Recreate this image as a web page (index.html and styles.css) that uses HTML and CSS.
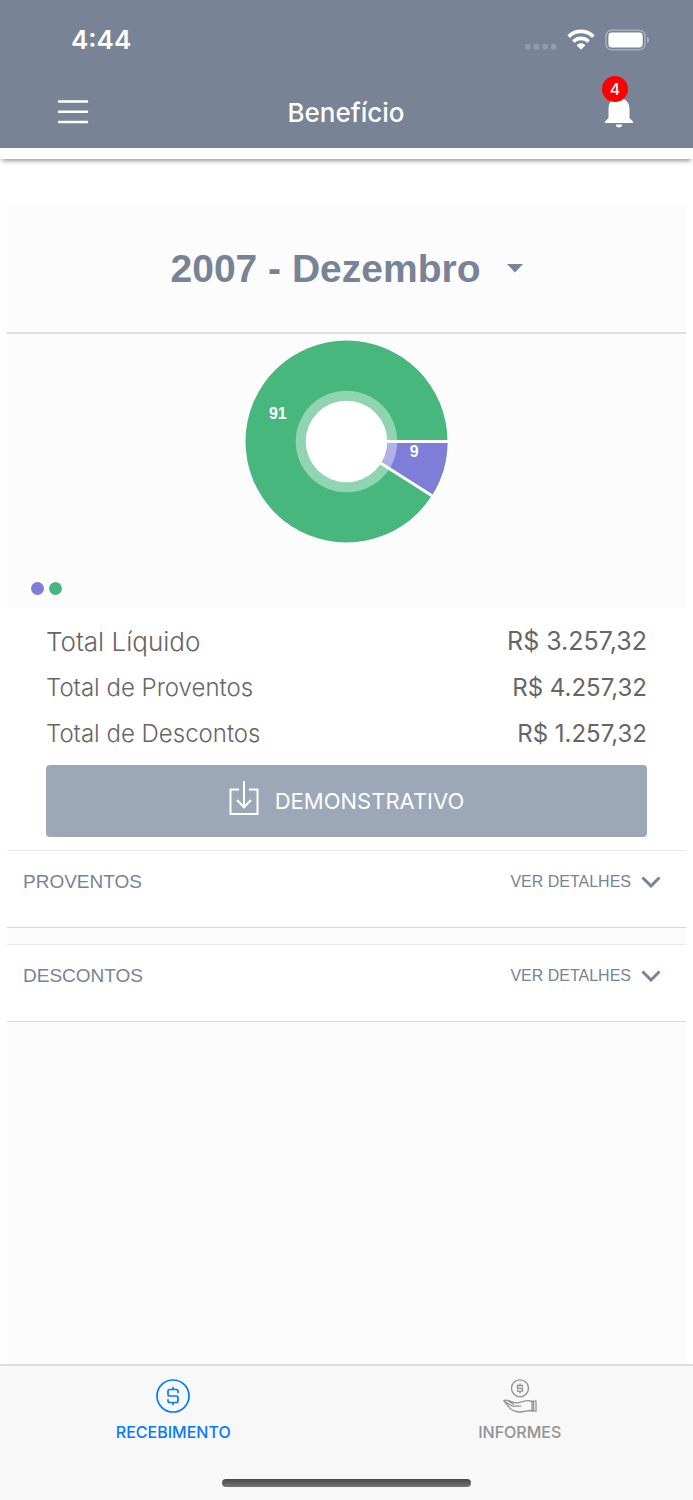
FILE: index.html
```html
<!DOCTYPE html>
<html lang="pt-BR">
<head>
  <meta charset="UTF-8">
  <meta name="viewport" content="width=device-width, initial-scale=1">
  <title>Benefício</title>
  <link rel="stylesheet" href="styles.css">
</head>
<body>

  <header class="header">
    <div class="status-bar">
      <span class="status-time">4:44</span>
      <div class="status-icons">
        <svg class="icon-signal" viewBox="0 0 32 6" aria-hidden="true">
          <rect x="0" y="0" width="5.500" height="5.500" rx="1.800"/>
          <rect x="8.700" y="0" width="5.500" height="5.500" rx="1.800"/>
          <rect x="17.400" y="0" width="5.500" height="5.500" rx="1.800"/>
          <rect x="26" y="0" width="5.500" height="5.500" rx="1.800"/>
        </svg>
        <svg class="icon-wifi" viewBox="0 0 28 22" aria-hidden="true">
          <path d="M14 .6C19.1.6 23.7 2.500 27.200 5.700c.3.3.3.7 0 1l-1.700 1.700c-.3.3-.7.3-1 0C21.700 5.800 18 4.300 14 4.300S6.300 5.800 3.500 8.400c-.3.3-.7.3-1 0L.8 6.700c-.3-.3-.3-.7 0-1C4.300 2.500 8.900.6 14 .6z"/>
          <path d="M14 7.500c3.200 0 6.200 1.200 8.500 3.300.3.3.3.7 0 1l-1.700 1.700c-.3.300-.7.300-1 0-1.500-1.400-3.600-2.300-5.800-2.300s-4.300.9-5.800 2.300c-.3.300-.7.300-1 0l-1.700-1.700c-.3-.3-.3-.7 0-1C7.800 8.700 10.800 7.500 14 7.500z"/>
          <path d="M14 14.200c1.500 0 2.800.6 3.900 1.500.3.300.3.700 0 1L14.500 20.200c-.3.300-.7.300-1 0l-3.400-3.500c-.3-.3-.3-.7 0-1 1.100-.9 2.400-1.500 3.900-1.500z"/>
        </svg>
        <svg class="icon-battery" viewBox="0 0 46 22" aria-hidden="true">
          <rect class="battery-case" x="1" y="1" width="40" height="20" rx="6"/>
          <path class="battery-tip" d="M43 8c1.500.6 2.300 1.700 2.300 3s-.8 2.400-2.300 3z"/>
          <rect x="3.500" y="3.400" width="35" height="15.200" rx="3.500"/>
        </svg>
      </div>
    </div>

    <div class="toolbar">
      <button class="icon-btn" type="button" aria-label="Menu">
        <svg class="icon-menu" viewBox="0 0 32 26" aria-hidden="true">
          <path d="M2 2.500h28M2 12.800h28M2 23h28"/>
        </svg>
      </button>
      <h1 class="toolbar-title">Benefício</h1>
      <button class="icon-btn" type="button" aria-label="Notificações">
        <svg class="icon-bell" viewBox="0 -2 28 32" aria-hidden="true">
          <path d="M14 0C8 0 3.500 4.500 3.500 10.500V20L0 23.500V25h28v-1.500L24.500 20v-9.500C24.500 4.500 20 0 14 0z"/>
          <path d="M10.800 26.500h6.400c0 1.900-1.300 3-3.200 3s-3.200-1.100-3.200-3z"/>
        </svg>
        <span class="badge">4</span>
      </button>
    </div>
    <div class="header-strip"></div>
  </header>

  <main class="content">
    <div class="period">
      <select class="period-select" aria-label="Período">
        <option>2007 - Dezembro</option>
      </select>
      <svg class="period-arrow" viewBox="0 0 16 9" aria-hidden="true">
        <path d="M0 0h16L8 8.500z"/>
      </svg>
    </div>

    <section class="chart-panel">
      <svg class="chart" viewBox="0 0 204 204" role="img" aria-label="Proventos e descontos">
        <circle class="slice-green" cx="102" cy="102" r="101.500"/>
        <path class="slice-purple" d="M102 102h101.500A101.500 101.500 0 0 1 187.700 156.400z"/>
        <path class="slice-gap" d="M102 102h102M102 102l86 54.600"/>
        <circle class="chart-ring" cx="102" cy="102" r="51"/>
        <circle class="chart-hole" cx="102" cy="102" r="41"/>
        <text class="chart-label" x="33" y="79">91</text>
        <text class="chart-label" x="170" y="118">9</text>
      </svg>
      <div class="legend">
        <span class="dot dot-purple"></span>
        <span class="dot dot-green"></span>
      </div>
    </section>

    <section class="summary">
      <dl class="totals">
        <div class="total-row total-main">
          <dt>Total Líquido</dt>
          <dd>R$ 3.257,32</dd>
        </div>
        <div class="total-row">
          <dt>Total de Proventos</dt>
          <dd>R$ 4.257,32</dd>
        </div>
        <div class="total-row">
          <dt>Total de Descontos</dt>
          <dd>R$ 1.257,32</dd>
        </div>
      </dl>
      <button class="btn-demonstrativo" type="button">
        <svg class="icon-download" viewBox="0 0 30 42" aria-hidden="true">
          <path d="M10 9.500H1.500V34h27V9.500H20M15 1v26M8 20l7 7.200 7-7.200"/>
        </svg>
        DEMONSTRATIVO
      </button>
    </section>

    <button class="detail-row" type="button" aria-expanded="false">
      <span class="detail-title">PROVENTOS</span>
      <span class="detail-link">VER DETALHES
        <svg class="icon-chevron" viewBox="0 0 20 12" aria-hidden="true"><path d="M1.500 1.500L10 10l8.500-8.500"/></svg>
      </span>
    </button>
    <button class="detail-row" type="button" aria-expanded="false">
      <span class="detail-title">DESCONTOS</span>
      <span class="detail-link">VER DETALHES
        <svg class="icon-chevron" viewBox="0 0 20 12" aria-hidden="true"><path d="M1.500 1.500L10 10l8.500-8.500"/></svg>
      </span>
    </button>
  </main>

  <footer class="footer">
    <nav class="tabs">
      <a class="tab tab-active" href="#recebimento" aria-current="page">
        <svg class="tab-icon" viewBox="0 0 34 34" aria-hidden="true">
          <circle cx="17" cy="17" r="16"/>
          <path d="M22 13.500v-1.300a1.700 1.700 0 0 0-1.700-1.700h-6.600a1.700 1.700 0 0 0-1.700 1.700v3.100a1.700 1.700 0 0 0 1.700 1.700h6.600a1.700 1.700 0 0 1 1.700 1.700v3.100a1.700 1.700 0 0 1-1.700 1.700h-6.600a1.700 1.700 0 0 1-1.700-1.700v-1M17 8.500v2M17 23.500v2"/>
        </svg>
        RECEBIMENTO
      </a>
      <a class="tab" href="#informes">
        <svg class="tab-icon tab-icon-hand" viewBox="0 0 34 34" aria-hidden="true">
          <circle cx="17" cy="9.300" r="8.500"/>
          <path d="M19.500 7.600V6.500h-5v2.800h5v2.900h-5v-1.100M17 4.800v1.700M17 12.200V14"/>
          <path d="M29 31.500c-4-.3-8 1.700-13 1.500-3.500-.5-8.500-2.600-10.500-5.500L.8 21.800c1.500-1.200 6 .2 8.200 1.200l4 .9c5 .2 8.500-2.800 13-2.300 1.500.5 2 .9 3 1M1 22l8.300 5.200h8.500M5 21.800l5.500 3.500"/>
          <path d="M29 22.200h4v10h-4zM30.500 22.200v10"/>
        </svg>
        INFORMES
      </a>
    </nav>
    <div class="home-indicator"></div>
  </footer>

</body>
</html>
```
FILE: styles.css
```css
* {
  box-sizing: border-box;
}

body {
  display: flex;
  flex-direction: column;
  min-height: 100vh;
  margin: 0;
  background: #fff;
  font-family: Inter, "Liberation Sans", sans-serif;
}

button {
  padding: 0;
  border: none;
  background: none;
  font: inherit;
  cursor: pointer;
}

svg {
  display: block;
  flex: none;
}

/* Header */

.header {
  background: #788395;
  color: #fff;
}

.status-bar {
  display: flex;
  align-items: center;
  justify-content: space-between;
  height: 76px;
  padding: 3px 43px 0 71px;
}

.status-time {
  font-size: 26px;
  font-weight: 600;
}

.status-icons {
  display: flex;
  align-items: center;
  gap: 10px;
  fill: #fff;
}

.icon-signal {
  width: 32px;
  height: 6px;
  margin-top: 14px;
  fill: #939cab;
}

.icon-wifi {
  width: 28px;
  height: 22px;
}

.icon-battery {
  width: 45px;
  height: 22px;
}

.battery-case {
  fill: none;
  stroke: #a8afbb;
  stroke-width: 1.5;
}

.battery-tip {
  fill: #a8afbb;
}

.toolbar {
  display: flex;
  align-items: center;
  justify-content: space-between;
  height: 72px;
  padding: 0 58px 0 57px;
}

.toolbar-title {
  margin: 0;
  font-size: 26px;
  font-weight: 500;
}

.icon-btn {
  position: relative;
  color: #fff;
}

.icon-menu {
  width: 32px;
  height: 26px;
  fill: none;
  stroke: #fff;
  stroke-width: 2.5;
  stroke-linecap: round;
}

.icon-bell {
  width: 32px;
  height: 32px;
  fill: #fff;
}

.badge {
  position: absolute;
  top: -20px;
  left: -1px;
  width: 26px;
  height: 26px;
  border-radius: 50%;
  background: #f00;
  font-size: 16px;
  font-weight: 500;
  line-height: 26px;
  text-align: center;
}

.header-strip {
  height: 11px;
  background: #fff;
  box-shadow: 0 4px 4px -2px rgba(0, 0, 0, 0.4);
}

/* Content */

.content {
  flex: 1;
  margin: 44px 7px 0;
  background: #fcfcfc;
}

.period {
  display: flex;
  align-items: center;
  justify-content: center;
  height: 131px;
  padding-top: 2px;
  border-bottom: 2px solid #dedede;
}

.period-select {
  appearance: none;
  padding: 0 42px 0 0;
  border: none;
  background: none;
  color: #788395;
  font-family: "Liberation Sans", Arial, sans-serif;
  font-size: 39px;
  font-weight: bold;
  cursor: pointer;
}

.period-arrow {
  width: 16px;
  height: 9px;
  margin-left: -16px;
  fill: #788395;
  pointer-events: none;
}

.chart-panel {
  padding: 6px 24px 13px;
}

.chart {
  width: 203px;
  height: 203px;
  margin: 0 auto;
}

.slice-green {
  fill: #48b77d;
}

.slice-purple {
  fill: #7e7dd7;
}

.slice-gap {
  fill: none;
  stroke: #fff;
  stroke-width: 3;
}

.chart-ring {
  fill: #fff;
  fill-opacity: 0.4;
}

.chart-hole {
  fill: #fff;
}

.chart-label {
  fill: #fff;
  font-family: "Liberation Sans", Arial, sans-serif;
  font-size: 16px;
  font-weight: bold;
  text-anchor: middle;
}

.legend {
  display: flex;
  gap: 5px;
  margin-top: 39px;
}

.dot {
  width: 13px;
  height: 13px;
  border-radius: 50%;
}

.dot-purple {
  background: #7e7dd7;
}

.dot-green {
  background: #48b77d;
}

/* Totals */

.summary {
  padding: 10px 39px 13px;
  background: #fff;
  color: #666;
}

.totals {
  margin: 0 0 9px;
}

.total-row {
  display: flex;
  align-items: center;
  justify-content: space-between;
  height: 46px;
  font-size: 24px;
}

.total-row dt {
  font-weight: 300;
}

.total-row dd {
  margin: 0;
}

.total-main {
  font-size: 26px;
}

.total-main dd {
  font-size: 25px;
}

.btn-demonstrativo {
  display: flex;
  align-items: center;
  justify-content: center;
  gap: 16px;
  width: 100%;
  height: 72px;
  border-radius: 4px;
  background: #9ca8b8;
  color: #fff;
  font-size: 22px;
}

.icon-download {
  width: 30px;
  height: 42px;
  fill: none;
  stroke: #fff;
  stroke-width: 2;
}

.detail-row {
  display: flex;
  align-items: flex-start;
  justify-content: space-between;
  width: 100%;
  height: 78px;
  padding: 0 25px 0 16px;
  border-top: 1px solid #e8e8e8;
  border-bottom: 1px solid #d8d8d8;
  background: #fff;
  color: #788395;
  font-family: "Liberation Sans", Arial, sans-serif;
  line-height: 62px;
}

.detail-row + .detail-row {
  margin-top: 16px;
}

.detail-title {
  font-size: 19px;
}

.detail-link {
  display: flex;
  align-items: center;
  gap: 10px;
  font-size: 16px;
}

.icon-chevron {
  width: 20px;
  height: 12px;
  fill: none;
  stroke: #788395;
  stroke-width: 3;
}

/* Tabs */

.footer {
  border-top: 2px solid #dedede;
  background: #f8f8f8;
}

.tabs {
  display: flex;
}

.tab {
  display: flex;
  flex: 1;
  flex-direction: column;
  align-items: center;
  gap: 9px;
  padding-top: 13px;
  color: #929292;
  font-size: 16px;
  font-weight: 500;
  line-height: 20px;
  text-decoration: none;
}

.tab-active {
  color: #067aff;
}

.tab-icon {
  width: 34px;
  height: 34px;
  fill: none;
  stroke: currentColor;
  stroke-width: 1.7;
  stroke-linecap: round;
}

.tab-icon-hand {
  stroke-width: 1.3;
}

.home-indicator {
  width: 36%;
  height: 8px;
  margin: 37px auto 13px;
  border-radius: 4px;
  background: linear-gradient(#484848, #777);
}
```
